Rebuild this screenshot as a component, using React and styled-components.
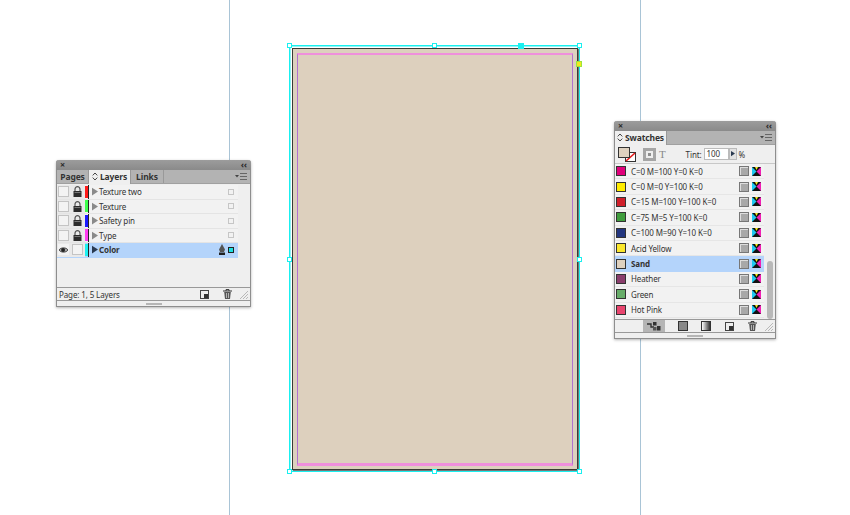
import React from "react";
import styled, { createGlobalStyle } from "styled-components";

const layers = [
  { name: "Texture two", color: "#ff1a1a" },
  { name: "Texture", color: "#3dff4d" },
  { name: "Safety pin", color: "#1a1aff" },
  { name: "Type", color: "#ff3df0" },
  { name: "Color", color: "#1ef0f0", active: true },
];

const swatches = [
  { name: "C=0 M=100 Y=0 K=0", color: "#e0007a" },
  { name: "C=0 M=0 Y=100 K=0", color: "#ffec00" },
  { name: "C=15 M=100 Y=100 K=0", color: "#cf1f2a" },
  { name: "C=75 M=5 Y=100 K=0", color: "#3f9c3d" },
  { name: "C=100 M=90 Y=10 K=0", color: "#23367f" },
  { name: "Acid Yellow", color: "#fbe72c" },
  { name: "Sand", color: "#ded1bf", active: true },
  { name: "Heather", color: "#8a3d6c" },
  { name: "Green", color: "#68ad6a" },
  { name: "Hot Pink", color: "#e8456e" },
];

const Lock = () => (
  <svg width="9" height="11" viewBox="0 0 9 11">
    <path d="M2 5V3.2a2.5 2.5 0 0 1 5 0V5" fill="none" stroke="#555" strokeWidth="1.2" />
    <rect x="0.5" y="5" width="8" height="6" fill="#2b2b2b" />
    <rect x="1.5" y="6" width="6" height="1" fill="#777" />
  </svg>
);

const Eye = () => (
  <svg width="11" height="8" viewBox="0 0 11 8">
    <path d="M0 4C2 .5 9 .5 11 4 9 7.5 2 7.5 0 4Z" fill="#aaa" stroke="#333" />
    <circle cx="5" cy="4" r="2.4" fill="#222" />
  </svg>
);

const Arrow = ({ dark, size = 7 }) => (
  <svg width={size} height={size * 1.3} viewBox="0 0 7 9">
    <path d="M0 0L7 4.5 0 9Z" fill={dark ? "#2a3a50" : "#8a8a8a"} />
  </svg>
);

const Updown = () => (
  <svg width="6" height="9" viewBox="0 0 6 9">
    <path d="M.7 3.4L3 1l2.3 2.4M.7 5.6L3 8l2.3-2.4" fill="none" stroke="#444" />
  </svg>
);

const Menu = () => (
  <svg width="12" height="7" viewBox="0 0 12 7">
    <path d="M0 2h4L2 4.5Z" fill="#444" />
    <path d="M5 .5h7M5 3.5h7M5 6.5h7" stroke="#666" />
  </svg>
);

const NewPage = () => (
  <svg width="9" height="9" viewBox="0 0 9 9">
    <rect x=".5" y=".5" width="8" height="8" fill="#eee" stroke="#444" />
    <rect x="4" y="4" width="4" height="4" fill="#333" />
  </svg>
);

const ShowAll = () => (
  <svg width="14" height="9" viewBox="0 0 14 9">
    <path d="M0 2h4v3h3" fill="none" stroke="#333" strokeWidth="1.4" />
    <rect x="6" y="0" width="3.5" height="3.5" fill="#333" />
    <rect x="10" y="4" width="3.5" height="4.5" fill="#333" />
    <rect x="6" y="5" width="3.5" height="3.5" fill="#555" />
  </svg>
);

const Trash = () => (
  <svg width="9" height="10" viewBox="0 0 9 10">
    <path d="M0 2h9M3 2V.6h3V2" fill="none" stroke="#333" />
    <path d="M1.2 3h6.6L7 10H2Z" fill="#555" />
    <path d="M3.5 4v5M5.5 4v5" stroke="#ddd" strokeWidth=".7" />
  </svg>
);

const Resize = () => (
  <svg width="9" height="9" viewBox="0 0 9 9">
    <path d="M9 1L1 9M9 4L4 9M9 7L7 9" stroke="#b8b8b8" />
  </svg>
);

const Cmyk = () => (
  <svg width="9" height="9" viewBox="0 0 9 9">
    <rect width="9" height="9" fill="#111" />
    <path d="M0 0L4.5 4.5 0 9Z" fill="#1ec8f0" />
    <path d="M9 0L4.5 4.5 9 9Z" fill="#f01eb4" />
    <path d="M3 0h3L4.5 3Z" fill="#f5ec1e" />
  </svg>
);

const FillStroke = () => (
  <svg width="18" height="15" viewBox="0 0 18 15">
    <rect x="7.5" y="5.5" width="10" height="9" fill="#fff" stroke="#333" />
    <path d="M8 14L17 6" stroke="#e01a1a" strokeWidth="1.6" />
    <rect x=".5" y=".5" width="11" height="10" fill="#ded1bf" stroke="#333" />
  </svg>
);

const Pen = () => (
  <svg width="8" height="11" viewBox="0 0 8 11">
    <path d="M4 0L7 5.5 6 8H2L1 5.5Z" fill="#555" />
    <rect x="1" y="8.5" width="6" height="2.5" fill="#222" />
  </svg>
);

const GlobalStyle = createGlobalStyle`
  html, body {
    margin: 0;
    padding: 0;
    background: #fff;
  }
`;

const Canvas = styled.div`
  position: relative;
  width: 850px;
  height: 515px;
  overflow: hidden;
  background: #fff;
  font-family: "Noto Sans", sans-serif;
  font-size: 8px;
  letter-spacing: -0.12px;
  color: #333;
`;

const Guide = styled.div`
  position: absolute;
  top: 0;
  bottom: 0;
  left: ${(p) => p.$x}px;
  width: 1px;
  background: #a9c4d6;
`;

const Selection = styled.div`
  position: absolute;
  left: 289px;
  top: 45px;
  width: 289px;
  height: 425px;
  border: 1px solid #19f0f0;
  box-shadow: inset 0 0 0 1px #8ff5f5;
`;

const Page = styled.div`
  position: absolute;
  left: 2px;
  top: 2px;
  right: 1px;
  bottom: 1px;
  box-sizing: border-box;
  padding: 4px 4px 3px;
  background: #ddd0be;
  border: 1px solid #3b3b36;
  box-shadow: 1px 1px 0 #777;
`;

const Margins = styled.div`
  height: 100%;
  box-sizing: border-box;
  border: 1px solid #b070d0;
  border-top: 2px solid #ef8fdc;
  border-bottom: 3px solid #ef8fdc;
`;

const Handle = styled.span`
  position: absolute;
  left: ${(p) => p.$x}px;
  top: ${(p) => p.$y}px;
  width: ${(p) => p.$size || 3}px;
  height: ${(p) => p.$size || 3}px;
  border: 1px solid ${(p) => p.$line || "#19f0f0"};
  background: ${(p) => p.$fill || "#fff"};
`;

const Panel = styled.section`
  position: absolute;
  left: ${(p) => p.$x}px;
  top: ${(p) => p.$y}px;
  width: ${(p) => p.$w}px;
  height: ${(p) => p.$h}px;
  box-sizing: border-box;
  display: flex;
  flex-direction: column;
  border: 1px solid #8e8e8e;
  border-top: 0;
  border-radius: 3px 3px 0 0;
  background: #efefef;
  box-shadow: 0 1px 3px rgba(0, 0, 0, 0.3);
`;

const TitleBar = styled.header`
  height: 10px;
  flex: none;
  display: flex;
  align-items: center;
  justify-content: space-between;
  padding: 0 4px;
  margin: 0 -1px;
  border-radius: 3px 3px 0 0;
  background: linear-gradient(#9c9c9c, #8a8a8a);
  color: #2a2a2a;
  font-size: 9px;
  line-height: 10px;
  font-weight: bold;
`;

const TabBar = styled.div`
  height: 13px;
  flex: none;
  display: flex;
  align-items: stretch;
  background: #b3b3b3;
  border-bottom: 1px solid #a0a0a0;
`;

const Tab = styled.div`
  width: ${(p) => p.$w}px;
  box-sizing: border-box;
  display: flex;
  align-items: center;
  justify-content: center;
  gap: 2px;
  font-weight: bold;
  font-size: 8.5px;
  line-height: 11px;
  padding-bottom: 1px;
  color: #333;
  background: ${(p) => (p.$active ? "#efefef" : "transparent")};
  border-right: 1px solid #999;
  margin-bottom: ${(p) => (p.$active ? "-1px" : "0")};
`;

const TabMenu = styled.div`
  margin-left: auto;
  display: flex;
  align-items: center;
  padding-right: 3px;
`;

const LayerList = styled.div`
  flex: 1;
  padding: 1px 12px 0 0;
  display: flex;
  flex-direction: column;
`;

const LayerRow = styled.div`
  height: 14.5px;
  box-sizing: border-box;
  display: grid;
  grid-template-columns: 28px 3px 1px 3px 6px 1fr 14px 12px;
  align-items: center;
  background: ${(p) => (p.$active ? "#b4d4fb" : "#f2f2f2")};
  border-bottom: 1px solid ${(p) => (p.$active ? "#b4d4fb" : "#e4e4e4")};
  font-weight: ${(p) => (p.$active ? "bold" : "normal")};
`;

const LayerCells = styled.div`
  grid-column: 1;
  height: 100%;
  display: grid;
  grid-template-columns: 12px 16px;
  background: #e9e9e9;
  align-items: center;
  justify-items: center;
`;

const EyeCell = styled.div`
  width: 11px;
  height: 11px;
  display: flex;
  align-items: center;
  justify-content: center;
  box-sizing: border-box;
  background: #f3f3f3;
  border: 1px solid ${(p) => (p.$bare ? "transparent" : "#c4c4c4")};
`;

const LockCell = styled.div`
  display: flex;
  align-items: center;
  justify-content: center;
`;

const LayerColor = styled.span`
  grid-column: 2;
  height: 12px;
  background: ${(p) => p.$color};
`;

const Divider = styled.span`
  grid-column: 3;
  height: 100%;
  background: #222;
`;

const ArrowCell = styled.span`
  grid-column: 5;
  display: flex;
`;

const LayerName = styled.span`
  grid-column: 6;
  padding-left: 1px;
  white-space: nowrap;
`;

const PenCell = styled.span`
  grid-column: 7;
  display: flex;
  justify-content: flex-end;
`;

const Proxy = styled.span`
  grid-column: 8;
  justify-self: start;
  margin-left: 2px;
  width: 4px;
  height: 4px;
  border: 1px solid ${(p) => (p.$active ? "#222" : "#c6c6c6")};
  background: ${(p) => (p.$active ? "#1ee0e0" : "transparent")};
`;

const Footer = styled.footer`
  height: ${(p) => p.$h}px;
  flex: none;
  display: flex;
  align-items: center;
  border-top: 1px solid #999;
  padding: 0 2px;
  gap: 13px;
`;

const FooterText = styled.span`
  margin-right: auto;
`;

const FooterButton = styled.span`
  display: flex;
  align-items: center;
  justify-content: center;
  width: ${(p) => p.$w || 10}px;
  height: 100%;
  background: ${(p) => (p.$on ? "#b5b5b5" : "transparent")};
`;

const ResizeCorner = styled.span`
  display: flex;
  margin-left: -6px;
`;

const Grip = styled.div`
  height: 5px;
  flex: none;
  display: flex;
  align-items: center;
  justify-content: center;
  border-top: 1px solid #999;
  background: #efefef;

  &::after {
    content: "";
    width: 16px;
    height: 2px;
    background: #b5b5b5;
  }
`;

const ToolRow = styled.div`
  height: 18px;
  flex: none;
  display: flex;
  align-items: center;
  padding: 0 3px;
`;

const FormatButton = styled.span`
  width: 13px;
  height: 13px;
  margin-left: 7px;
  box-sizing: border-box;
  background: #8e8e8e;
  border: 3px solid #a5a5a5;
  box-shadow: inset 0 0 0 2px #eee;
`;

const TextIcon = styled.span`
  margin-left: 3px;
  font-family: "Liberation Serif", serif;
  font-size: 11px;
  color: #888;
`;

const TintLabel = styled.span`
  margin-left: 20px;
`;

const TintField = styled.span`
  margin-left: 2px;
  width: 25px;
  height: 12px;
  padding-left: 2px;
  box-sizing: border-box;
  background: #fff;
  border: 1px solid #bbb;
  line-height: 10px;
`;

const TintStep = styled.span`
  width: 8px;
  height: 12px;
  margin-right: 2px;
  box-sizing: border-box;
  display: flex;
  align-items: center;
  justify-content: center;
  background: #e2e2e2;
  border: 1px solid #bbb;
`;

const SwatchArea = styled.div`
  flex: 1;
  min-height: 0;
  display: flex;
  border-top: 1px solid #c8c8c8;
`;

const SwatchList = styled.div`
  flex: 1;
`;

const SwatchRow = styled.div`
  height: 15.4px;
  box-sizing: border-box;
  display: flex;
  align-items: center;
  padding: 0 3px 0 1px;
  background: ${(p) => (p.$active ? "#b4d4fb" : "#f2f2f2")};
  border-bottom: 1px solid ${(p) => (p.$active ? "#b4d4fb" : "#e6e6e6")};
  font-weight: ${(p) => (p.$active ? "bold" : "normal")};
`;

const Chip = styled.span`
  width: 8px;
  height: 8px;
  flex: none;
  border: 1px solid #333;
  background: ${(p) => p.$color};
`;

const SwatchName = styled.span`
  margin-left: 5px;
  margin-right: auto;
  white-space: nowrap;
`;

const SpotBox = styled.span`
  width: 8px;
  height: 8px;
  margin-right: 3px;
  background: #a8a8a8;
  border: 1px solid #777;
  box-shadow: inset 1px 1px 0 #ddd;
`;

const ScrollTrack = styled.div`
  width: 11px;
  flex: none;
  display: flex;
  flex-direction: column;
  justify-content: flex-end;
  align-items: center;
`;

const ScrollThumb = styled.div`
  width: 6px;
  height: 58px;
  border-radius: 3px;
  background: #b9b9b9;
`;

function App() {
  return (
    <Canvas>
      <GlobalStyle />
      <Guide $x={229} />
      <Guide $x={640} />

      <Selection>
        <Page>
          <Margins />
        </Page>
        <Handle $x={-3} $y={-3} />
        <Handle $x={142} $y={-3} />
        <Handle $x={228} $y={-3} $size={4} $fill="#19f0f0" />
        <Handle $x={287} $y={-3} />
        <Handle $x={-3} $y={211} />
        <Handle $x={287} $y={211} />
        <Handle $x={-3} $y={423} />
        <Handle $x={142} $y={423} />
        <Handle $x={287} $y={423} />
        <Handle $x={286} $y={15} $size={4} $fill="#f2e81e" $line="#9be63c" />
      </Selection>

      <Panel $x={56} $y={160} $w={195} $h={147}>
        <TitleBar>
          <span>×</span>
          <span>‹‹</span>
        </TitleBar>
        <TabBar>
          <Tab $w={32}>Pages</Tab>
          <Tab $active $w={42}>
            <Updown />
            Layers
          </Tab>
          <Tab $w={33}>Links</Tab>
          <TabMenu>
            <Menu />
          </TabMenu>
        </TabBar>
        <LayerList>
          {layers.map((layer) => (
            <LayerRow key={layer.name} $active={layer.active}>
              <LayerCells>
                <EyeCell $bare={layer.active}>{layer.active && <Eye />}</EyeCell>
                <LockCell>
                  {layer.active ? <EyeCell /> : <Lock />}
                </LockCell>
              </LayerCells>
              <LayerColor $color={layer.color} />
              <Divider />
              <ArrowCell>
                <Arrow dark={layer.active} />
              </ArrowCell>
              <LayerName>{layer.name}</LayerName>
              {layer.active && (
                <PenCell>
                  <Pen />
                </PenCell>
              )}
              <Proxy $active={layer.active} />
            </LayerRow>
          ))}
        </LayerList>
        <Footer $h={12}>
          <FooterText>Page: 1, 5 Layers</FooterText>
          <FooterButton>
            <NewPage />
          </FooterButton>
          <FooterButton>
            <Trash />
          </FooterButton>
          <ResizeCorner>
            <Resize />
          </ResizeCorner>
        </Footer>
        <Grip />
      </Panel>

      <Panel $x={614} $y={121} $w={162} $h={218}>
        <TitleBar>
          <span>×</span>
          <span>‹‹</span>
        </TitleBar>
        <TabBar>
          <Tab $active $w={52}>
            <Updown />
            Swatches
          </Tab>
          <TabMenu>
            <Menu />
          </TabMenu>
        </TabBar>
        <ToolRow>
          <FillStroke />
          <FormatButton />
          <TextIcon>T</TextIcon>
          <TintLabel>Tint:</TintLabel>
          <TintField>100</TintField>
          <TintStep>
            <Arrow dark size={4} />
          </TintStep>
          %
        </ToolRow>
        <SwatchArea>
          <SwatchList>
            {swatches.map((swatch) => (
              <SwatchRow key={swatch.name} $active={swatch.active}>
                <Chip $color={swatch.color} />
                <SwatchName>{swatch.name}</SwatchName>
                <SpotBox />
                <Cmyk />
              </SwatchRow>
            ))}
          </SwatchList>
          <ScrollTrack>
            <ScrollThumb />
          </ScrollTrack>
        </SwatchArea>
        <Footer $h={12}>
          <FooterText />
          <FooterButton $on $w={22}>
            <ShowAll />
          </FooterButton>
          <FooterButton>
            <Chip $color="#888" />
          </FooterButton>
          <FooterButton>
            <Chip $color="linear-gradient(90deg,#fff,#333)" />
          </FooterButton>
          <FooterButton>
            <NewPage />
          </FooterButton>
          <FooterButton>
            <Trash />
          </FooterButton>
          <ResizeCorner>
            <Resize />
          </ResizeCorner>
        </Footer>
        <Grip />
      </Panel>
    </Canvas>
  );
}

export default App;
